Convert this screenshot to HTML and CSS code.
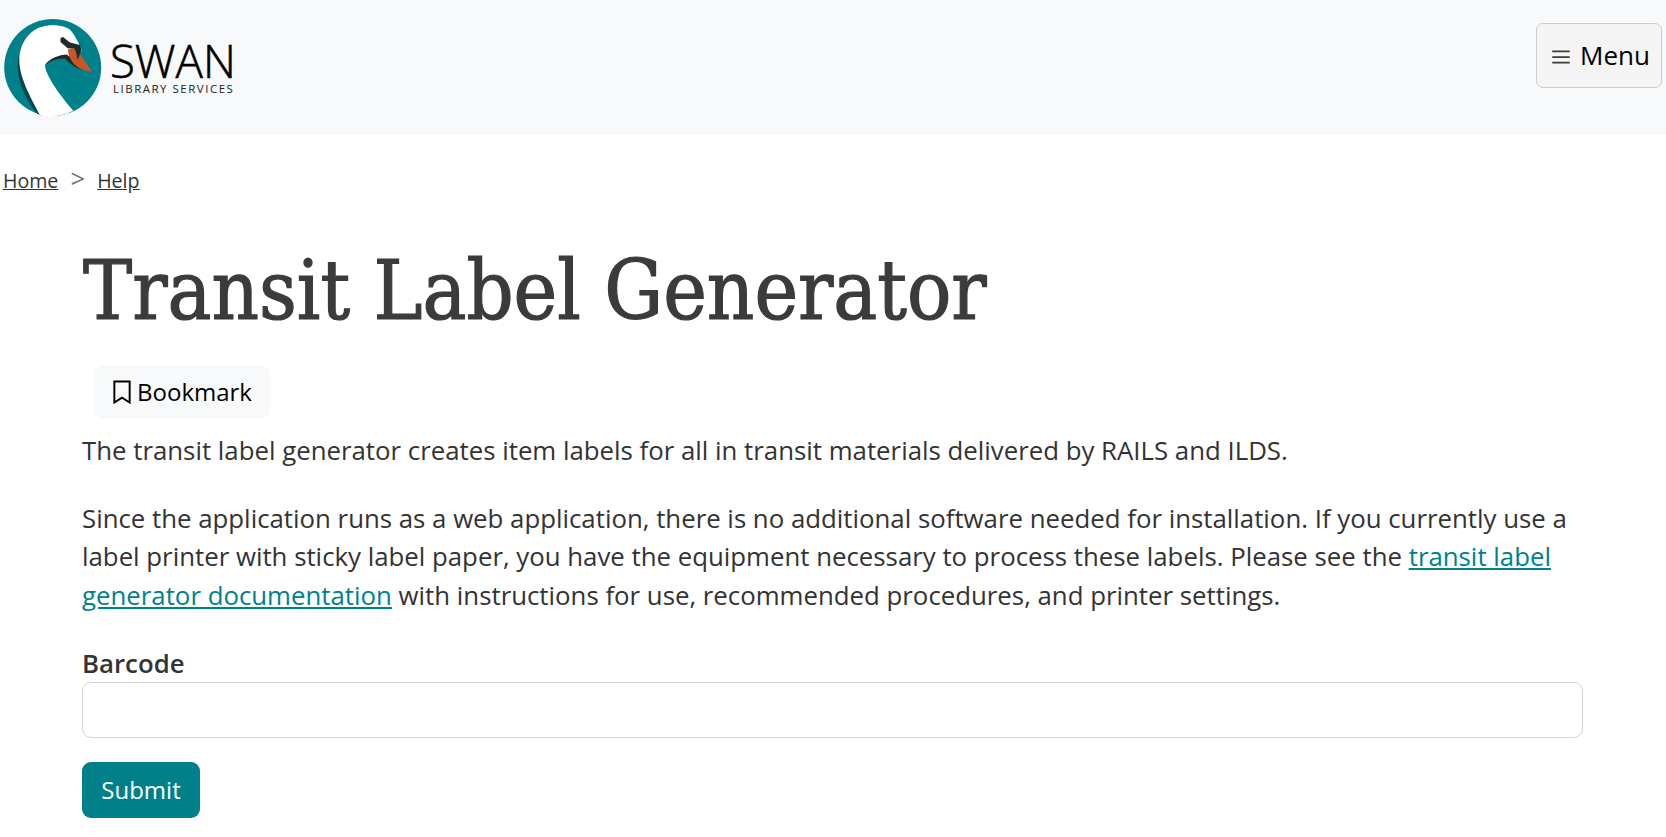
FILE: index.html
```html
<!DOCTYPE html>
<html lang="en">
<head>
<meta charset="utf-8">
<title>Transit Label Generator</title>
<link rel="stylesheet" href="styles.css">
</head>
<body>
<header class="site-header">
  <a class="brand" href="#">
    <svg class="brand-mark" viewBox="0 0 98 98" width="98" height="98" aria-hidden="true">
      <circle cx="48.7" cy="48.5" r="48.5" fill="#00818a"/>
      <path d="M15 36C10 55 20 80 33 94.500L38 97 30 60Z" fill="#004a50"/>
      <path d="M36 96.500C30 84 15 60 15.300 41 15.500 22 28 8 44 6.500 55 5.500 65 8 68 13 71 17 75 24 78 32L64 37C56 37 46 40 41 46 41 54 52 72 69.300 91.700 62 95.500 55 97 48.700 97 44 97 40 97 36 96.500Z" fill="#fff"/>
      <path d="M41 46C46 39 55 36 63 35.500L66 39 80 51C72 49.500 66 45 61 39.500 54 39 47 41.500 41 46Z" fill="#1f2a2c"/>
      <path d="M64 30.500L71 28 87.700 52 87 52.500C81 52 76 50 71 46 67 42 64 36 64 30.500Z" fill="#c9562a"/>
      <path d="M56.500 19L59 18 66 23.500 76 26 77.500 31 73.500 41 72 33 70 29 64 29.500 56.500 23Z" fill="#1f2a2c"/>
    </svg>
    <span class="brand-text">
      <span class="brand-name">SWAN</span>
      <span class="brand-sub">LIBRARY SERVICES</span>
    </span>
  </a>
  <button class="menu-btn" type="button">
    <svg class="menu-icon" viewBox="0 0 16 16" width="20" height="20" aria-hidden="true">
      <path d="M1 3.500h14M1 8h14M1 12.500h14" stroke="#3b3b3b" stroke-width="1.400" fill="none"/>
    </svg>
    <span class="menu-label">Menu</span>
  </button>
</header>
<nav class="crumbs">
  <a href="#">Home</a><span class="crumb-sep">&gt;</span><a href="#">Help</a>
</nav>
<main class="content">
  <h1 class="title">Transit Label Generator</h1>
  <button class="bookmark" type="button">
    <svg viewBox="0 0 16 16" width="24" height="24" aria-hidden="true">
      <path d="M2.900 1h10.200V15L8 11.800 2.900 15Z" fill="none" stroke="#000" stroke-width="1.300"/>
    </svg>
    <span class="bookmark-label">Bookmark</span>
  </button>
  <p class="lead">The transit label generator creates item labels for all in transit materials delivered by RAILS and ILDS.</p>
  <p class="para">Since the application runs as a web application, there is no additional software needed for installation. If you currently use a label printer with sticky label paper, you have the equipment necessary to process these labels. Please see the <a href="#">transit label generator documentation</a> with instructions for use, recommended procedures, and printer settings.</p>
  <form class="form">
    <label class="field-label" for="barcode">Barcode</label>
    <input class="field-input" id="barcode" type="text">
    <button class="submit" type="button">Submit</button>
  </form>
</main>
</body>
</html>
```
FILE: styles.css
```css
* { box-sizing: border-box; }
html, body { margin: 0; padding: 0; }
body {
  font-family: "Open Sans", sans-serif;
  color: #333;
  background: #fff;
  font-size: 25.800px;
  line-height: 38.700px;
  height: 837px;
  overflow: hidden;
}
.site-header {
  height: 135px;
  background: #f8f9fa;
  display: flex;
  align-items: flex-start;
  justify-content: space-between;
  padding: 19px 4px 0 4px;
}
.brand {
  display: flex;
  align-items: flex-start;
  gap: 8px;
  text-decoration: none;
  color: #000;
}
.brand-mark { display: block; flex: none; }
.brand-text { display: flex; flex-direction: column; padding-top: 20px; }
.brand-name {
  font-size: 45.600px;
  font-weight: 300;
  line-height: 43px;
  color: #000;
  -webkit-text-stroke: 0.600px #000;
}
.brand-sub {
  font-size: 11.500px;
  line-height: 14px;
  letter-spacing: 1.500px;
  color: #222;
  padding-left: 3px;
}
.menu-btn {
  display: flex;
  align-items: center;
  gap: 9px;
  width: 126px;
  height: 65px;
  margin-top: 4px;
  padding: 0 0 0 14px;
  background: #f5f5f5;
  border: 1px solid #ccc;
  border-radius: 7px;
  font: 26px "Open Sans", sans-serif;
  color: #000;
}
.menu-icon { flex: none; margin-top: 3px; }
.menu-label { margin-bottom: 2px; }
.crumbs {
  display: flex;
  align-items: center;
  padding: 28px 0 0 3px;
  font-size: 19.600px;
  line-height: 36px;
}
.crumbs a { color: #333; }
.crumb-sep { color: #6c757d; font-size: 25.800px; margin: -6px 12px 0; }
.content { padding: 0 83px 0 82px; }
.title {
  font-family: "DejaVu Serif Condensed", "DejaVu Serif", serif;
  font-stretch: condensed;
  font-weight: 400;
  font-size: 82px;
  line-height: 98px;
  color: #3b3b3b;
  margin: 43px 0 0 1px;
  -webkit-text-stroke: 1.200px #3b3b3b;
}
.bookmark {
  display: flex;
  align-items: center;
  gap: 3px;
  height: 54px;
  margin: 25px 0 0 12px;
  padding: 0 18px 0 16px;
  border: 0;
  border-radius: 10px;
  background: #f8f9fa;
  font: 24px "Open Sans", sans-serif;
  color: #000;
}
.bookmark-label { margin-bottom: 2px; }
.lead { margin: 12px 0 29px; }
.para { margin: 0 0 29px; }
.para a { color: #00818a; }
.form { display: flex; flex-direction: column; align-items: flex-start; }
.field-label { font-weight: 600; line-height: 38px; margin-bottom: 0; }
.field-input {
  width: 100%;
  height: 56px;
  border: 1px solid #ced4da;
  border-radius: 9px;
  background: #fff;
}
.submit {
  margin-top: 24px;
  width: 118px;
  height: 56px;
  border: 0;
  border-radius: 9px;
  background: #00818a;
  color: #fff;
  font: 24px "Open Sans", sans-serif;
}
```
